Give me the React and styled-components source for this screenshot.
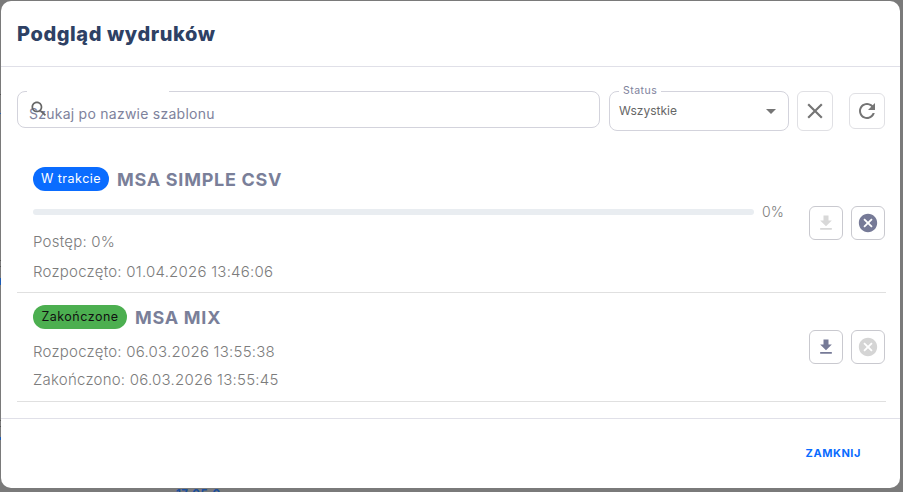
import React from 'react';
import styled, { createGlobalStyle } from 'styled-components';

const Global = createGlobalStyle`
  html, body { margin: 0; padding: 0; background: #7a7a7a; }
  body { font-family: Inter, "Noto Sans", "Liberation Sans", sans-serif; }
  * { box-sizing: border-box; }
`;

const Page = styled.div`
  position: relative;
  width: 903px;
  height: 492px;
  overflow: hidden;
  padding: 1px 3px 4px 1px;
`;

const BehindText = styled.span`
  position: absolute;
  left: 176px;
  top: 487px;
  font-size: 11.5px;
  font-weight: 700;
  letter-spacing: 0.4px;
  color: #1c4f9c;
`;

const EdgeStrip = styled.span`
  position: absolute;
  left: 0;
  top: 0;
  width: 1px;
  height: 492px;
  background: linear-gradient(
    to bottom,
    transparent 94px, #555 94px, #555 95px,
    transparent 95px, transparent 113px, #2a62b0 113px, #2a62b0 114px,
    transparent 114px, transparent 260px, #555 260px, #555 261px,
    transparent 261px, transparent 266px, #555 266px, #555 267px,
    transparent 267px, transparent 278px, #1c5bb5 278px, #1c5bb5 285px,
    transparent 285px, transparent 420px, #555 420px, #555 421px,
    transparent 421px, transparent 426px, #555 426px, #555 427px,
    transparent 427px, transparent 437px, #1c5bb5 437px, #1c5bb5 440px,
    transparent 440px
  );
`;

const Dialog = styled.div`
  position: relative;
  height: 487px;
  background: #fff;
  border-radius: 10px;
  display: flex;
  flex-direction: column;
`;

const Header = styled.header`
  height: 66px;
  padding: 0 16px;
  display: flex;
  align-items: center;
  border-bottom: 1px solid #e0e0e8;
`;

const Title = styled.h2`
  margin: 0;
  font-size: 20px;
  font-weight: 800;
  letter-spacing: 0.58px;
  color: #2e4164;
`;

const Toolbar = styled.div`
  display: flex;
  align-items: center;
  height: 40px;
  margin: 24px 14px 0 16px;
`;

const SearchBox = styled.div`
  position: relative;
  align-self: flex-start;
  width: 583px;
  height: 37px;
  margin-right: 9px;
  border: 1px solid #d3d3dc;
  border-radius: 8px;
  padding: 13px 0 0 11px;
  font-size: 14px;
  line-height: 18px;
  letter-spacing: 0.25px;
  color: #7e829c;
  font-weight: 400;
  &::before {
    content: '';
    position: absolute;
    left: 9px;
    top: -1px;
    width: 142px;
    height: 2px;
    background: #fff;
  }
`;

const SearchIconWrap = styled.span`
  position: absolute;
  left: 11px;
  top: 7px;
  display: flex;
  color: #666;
`;

const SelectBox = styled.div`
  position: relative;
  width: 180px;
  height: 40px;
  margin-right: 8px;
  border: 1px solid #d3d3dc;
  border-radius: 8px;
  padding: 0 9px 2px;
  display: flex;
  align-items: center;
  justify-content: space-between;
  font-size: 12px;
  color: #666;
`;

const SelectLabel = styled.span`
  position: absolute;
  left: 9px;
  top: -8px;
  padding: 0 4px;
  background: #fff;
  font-size: 10.5px;
  line-height: 13px;
  letter-spacing: 0.5px;
  color: #7e829c;
`;

const Caret = styled.span`
  width: 0;
  height: 0;
  margin-right: 3px;
  margin-top: 2px;
  border-left: 5px solid transparent;
  border-right: 5px solid transparent;
  border-top: 5px solid #757575;
`;

const IconButton = styled.button`
  width: ${p => p.$w || 34}px;
  height: ${p => p.$h || 34}px;
  margin-left: ${p => p.$ml || 0}px;
  padding: 0;
  flex: none;
  display: flex;
  align-items: center;
  justify-content: center;
  background: #fff;
  border: 1px solid ${p => p.$border || '#c9c9cf'};
  border-radius: 6px;
  color: ${p => p.$color};
`;

const List = styled.div`
  margin: 0 14px 0 16px;
  flex: 1;
`;

const Item = styled.div`
  height: ${p => p.$h}px;
  padding: ${p => p.$pt}px 0 0 16px;
  border-bottom: 1px solid #e0e0e0;
  display: flex;
  align-items: flex-start;
`;

const ItemBody = styled.div`
  flex: 1;
  min-width: 0;
`;

const TitleRow = styled.div`
  display: flex;
  align-items: center;
  height: 24px;
  gap: 8px;
`;

const Badge = styled.span`
  height: 24px;
  width: ${p => p.$w}px;
  border-radius: 12px;
  background: ${p => p.$bg};
  color: ${p => p.$fg};
  font-size: 12.5px;
  line-height: 24px;
  letter-spacing: 0.5px;
  text-align: center;
  font-weight: 400;
  white-space: nowrap;
`;

const JobName = styled.span`
  font-size: 18px;
  font-weight: 700;
  letter-spacing: 0.72px;
  color: #7a7f99;
  white-space: nowrap;
`;

const ProgressRow = styled.div`
  display: flex;
  align-items: center;
  margin-top: 12px;
  height: 18px;
  margin-bottom: 6px;
`;

const Track = styled.div`
  width: 721px;
  height: 6px;
  border-radius: 3px;
  background: #e9edf1;
`;

const Percent = styled.span`
  margin-left: 8px;
  margin-top: -2px;
  font-size: 14px;
  font-weight: 300;
  color: #7c7c7c;
`;

const Detail = styled.div`
  height: ${p => p.$h || 30}px;
  margin-top: ${p => p.$mt || 0}px;
  line-height: ${p => p.$h || 30}px;
  font-size: 15px;
  font-weight: 300;
  letter-spacing: 0.23px;
  color: #7c7c7c;
  white-space: nowrap;
`;

const Actions = styled.div`
  display: flex;
  gap: 8px;
  margin-right: 1px;
  margin-top: ${p => p.$mt || 0}px;
`;

const Footer = styled.footer`
  height: 70px;
  border-top: 1px solid #e0e0e8;
  display: flex;
  align-items: center;
  justify-content: flex-end;
  padding: 0 39px 2px 0;
`;

const CloseAction = styled.button`
  border: 0;
  background: none;
  padding: 0;
  font: inherit;
  font-size: 11px;
  font-weight: 700;
  letter-spacing: 0.55px;
  color: #0a6cff;
`;

const Icon = ({ d, size = 24, color = 'currentColor' }) => (
  <svg width={size} height={size} viewBox="0 0 24 24" fill={color}><path d={d} /></svg>
);

const DOWNLOAD = 'M19 9h-4V3H9v6H5l7 7 7-7zM5 18v2h14v-2H5z';
const CANCEL = 'M12 2C6.47 2 2 6.47 2 12s4.47 10 10 10 10-4.47 10-10S17.53 2 12 2zm5 13.59L15.59 17 12 13.41 8.41 17 7 15.59 10.59 12 7 8.41 8.41 7 12 10.59 15.59 7 17 8.41 13.41 12 17 15.59z';
const CLOSE = 'M19 6.41 17.59 5 12 10.59 6.41 5 5 6.41 10.59 12 5 17.59 6.41 19 12 13.41 17.59 19 19 17.59 13.41 12z';
const REFRESH = 'M17.65 6.35C16.2 4.9 14.21 4 12 4c-4.42 0-7.99 3.58-7.99 8s3.57 8 7.99 8c3.73 0 6.84-2.55 7.73-6h-2.08c-.82 2.33-3.04 4-5.65 4-3.31 0-6-2.69-6-6s2.69-6 6-6c1.66 0 3.14.69 4.22 1.78L13 11h7V4l-2.35 2.35z';
const SEARCH = 'M15.5 14h-.79l-.28-.27C15.41 12.59 16 11.11 16 9.5 16 5.91 13.09 3 9.5 3S3 5.91 3 9.5 5.91 16 9.5 16c1.61 0 3.09-.59 4.23-1.57l.27.28v.79l5 4.99L20.49 19l-4.99-5zm-6 0C7.01 14 5 11.99 5 9.5S7.01 5 9.5 5 14 7.01 14 9.5 11.99 14 9.5 14z';

export default function App() {
  return (
    <>
      <Global />
      <Page>
        <BehindText>17:05:0</BehindText>
        <EdgeStrip />
        <Dialog>
          <Header><Title>Podgląd wydruków</Title></Header>
          <Toolbar>
            <SearchBox>
              <SearchIconWrap><Icon d={SEARCH} size={20} /></SearchIconWrap>
              Szukaj po nazwie szablonu
            </SearchBox>
            <SelectBox>
              <SelectLabel>Status</SelectLabel>
              Wszystkie
              <Caret />
            </SelectBox>
            <IconButton $w={36} $h={40} $border="#e0e0e4" $color="#757575"><Icon d={CLOSE} size={26} /></IconButton>
            <IconButton $w={36} $h={36} $ml={16} $border="#e0e0e4" $color="#757575"><Icon d={REFRESH} size={24} /></IconButton>
          </Toolbar>
          <List>
            <Item $h={162} $pt={36}>
              <ItemBody>
                <TitleRow>
                  <Badge $w={76} $bg="#0a6cff" $fg="#fff">W trakcie</Badge>
                  <JobName>MSA SIMPLE CSV</JobName>
                </TitleRow>
                <ProgressRow><Track /><Percent>0%</Percent></ProgressRow>
                <Detail>Postęp: 0%</Detail>
                <Detail>Rozpoczęto: 01.04.2026 13:46:06</Detail>
              </ItemBody>
              <Actions $mt={39}>
                <IconButton $color="#d8d8d8"><Icon d={DOWNLOAD} size={20} /></IconButton>
                <IconButton $color="#767a97"><Icon d={CANCEL} size={22} /></IconButton>
              </Actions>
            </Item>
            <Item $h={109} $pt={12}>
              <ItemBody>
                <TitleRow>
                  <Badge $w={94} $bg="#4caf50" $fg="#111">Zakończone</Badge>
                  <JobName>MSA MIX</JobName>
                </TitleRow>
                <Detail $mt={9} $h={28}>Rozpoczęto: 06.03.2026 13:55:38</Detail>
                <Detail $h={28}>Zakończono: 06.03.2026 13:55:45</Detail>
              </ItemBody>
              <Actions $mt={25}>
                <IconButton $color="#767a97"><Icon d={DOWNLOAD} size={20} /></IconButton>
                <IconButton $color="#d5d5d5"><Icon d={CANCEL} size={22} /></IconButton>
              </Actions>
            </Item>
          </List>
          <Footer><CloseAction>ZAMKNIJ</CloseAction></Footer>
        </Dialog>
      </Page>
    </>
  );
}
